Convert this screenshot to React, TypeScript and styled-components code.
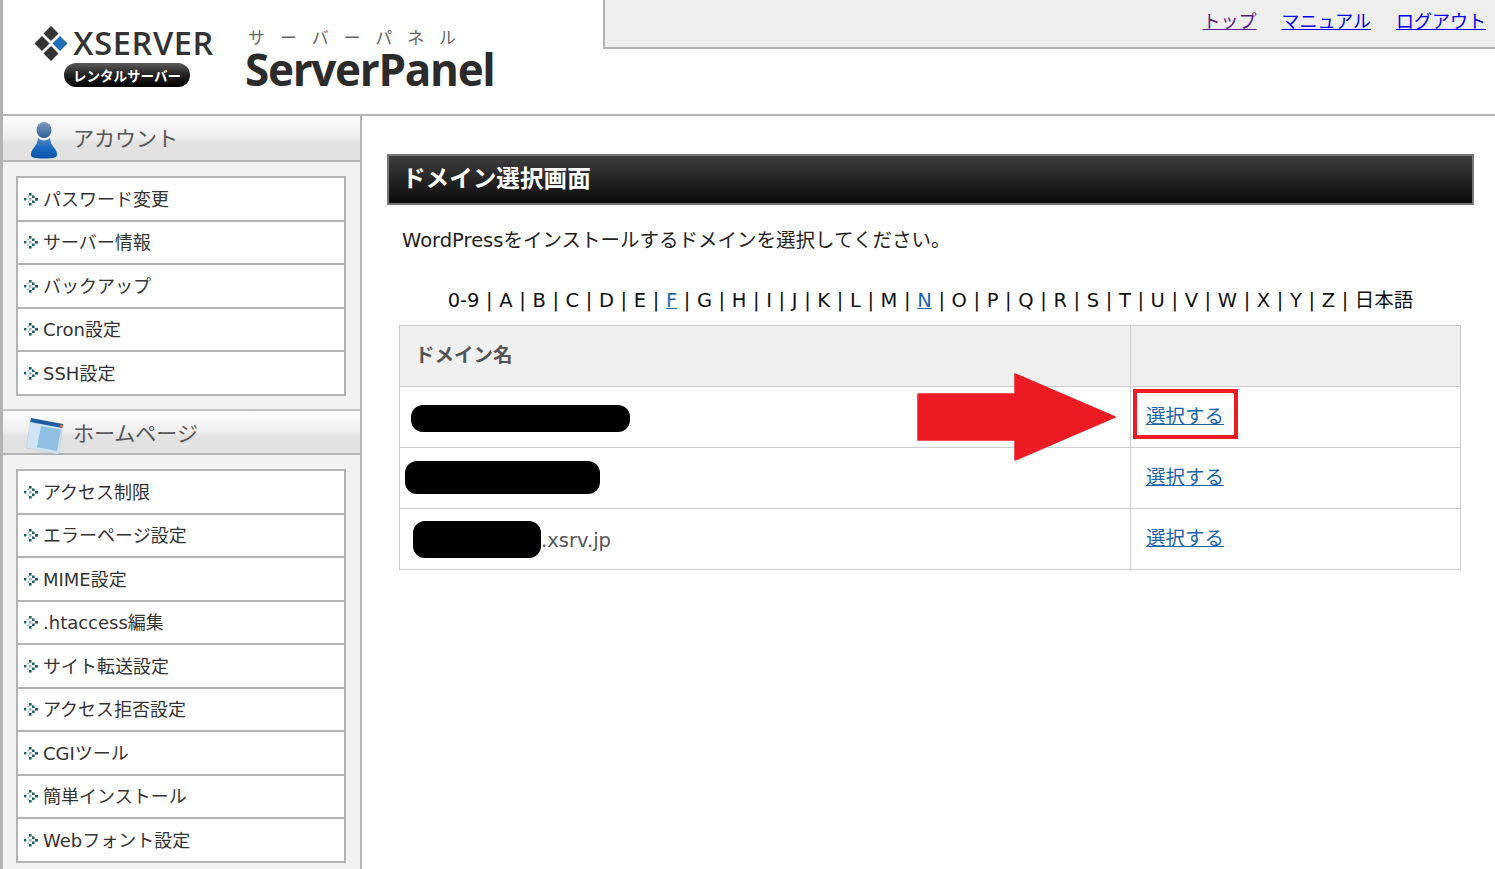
import React from 'react';
import styled, { createGlobalStyle } from 'styled-components';

const GlobalStyle = createGlobalStyle`
  html, body {
    margin: 0;
    padding: 0;
    height: 100%;
    overflow: hidden;
    background: #fff;
  }
  body {
    font-family: "DejaVu Sans", "Noto Sans CJK JP", sans-serif;
    color: #333;
  }
`;

const Page = styled.div`
  height: 869px;
  overflow: hidden;
  border-left: 3px solid #b3b3b3;
  display: flex;
  flex-direction: column;
`;

const Header = styled.header`
  height: 114px;
  flex: none;
  display: flex;
  justify-content: space-between;
  align-items: flex-start;
  border-bottom: 2px solid #b3b3b3;
`;

const Logos = styled.div`
  display: flex;
  padding: 25px 0 0 32px;
`;

const XserverLogo = styled.div`
  width: 179px;
  display: flex;
  flex-direction: column;
  align-items: flex-end;
`;

const XserverRow = styled.div`
  display: flex;
  align-items: center;
  gap: 5px;
  height: 36px;
`;

const XserverName = styled.span`
  font-family: "Open Sans", sans-serif;
  font-size: 32.5px;
  font-weight: 600;
  line-height: 36px;
  color: #333;
  letter-spacing: 0.65px;
`;

const RentalPill = styled.div`
  width: 126px;
  height: 24px;
  margin: 2px 24px 0 0;
  border-radius: 12px;
  background: linear-gradient(#5a5a5a, #222 50%, #000);
  color: #fff;
  font-family: "Noto Sans CJK JP", sans-serif;
  font-size: 13.5px;
  font-weight: 700;
  line-height: 24px;
  text-align: center;
  white-space: nowrap;
`;

const PanelLogo = styled.div`
  margin-left: 31px;
  display: flex;
  flex-direction: column;
`;

const PanelKana = styled.span`
  font-family: "Noto Sans CJK JP", sans-serif;
  font-size: 17px;
  line-height: 24px;
  letter-spacing: 14.9px;
  color: #666;
  padding-left: 3px;
  white-space: nowrap;
`;

const PanelName = styled.span`
  font-family: "Open Sans", sans-serif;
  font-size: 44px;
  font-weight: 700;
  line-height: 48px;
  margin-top: -4px;
  letter-spacing: -1.3px;
  color: #2b2b2b;
`;

const TopBar = styled.nav`
  width: 892px;
  height: 49px;
  box-sizing: border-box;
  background: #eee;
  border-left: 2px solid #b3b3b3;
  border-bottom: 2px solid #b3b3b3;
  display: flex;
  justify-content: flex-end;
  gap: 25px;
  padding: 7px 9px 0 0;
  font-family: "Noto Sans CJK JP", sans-serif;
  font-size: 18px;
  line-height: 26px;
`;

const TopLink = styled.a<{ $visited?: boolean }>`
  color: ${(p) => (p.$visited ? '#551a8b' : '#0000ee')};
  text-decoration: underline;
  cursor: pointer;
`;

const Body = styled.div`
  flex: 1;
  display: flex;
  min-height: 0;
`;

const Sidebar = styled.aside`
  width: 357px;
  flex: none;
  box-sizing: content-box;
  background: #f2f2f2;
  border-right: 2px solid #b3b3b3;
`;

const SectionHead = styled.div<{ $first?: boolean }>`
  height: 46px;
  box-sizing: border-box;
  display: flex;
  align-items: center;
  gap: 9px;
  padding-left: ${(p) => (p.$first ? '27px' : '23px')};
  background: linear-gradient(#fdfdfd 0%, #eeeeee 50%, #e2e2e2 60%, #e2e2e2 100%);
  border-top: ${(p) => (p.$first ? 'none' : '2px solid #c4c4c4')};
  border-bottom: 2px solid #b3b3b3;
  margin-top: ${(p) => (p.$first ? '0' : '13.5px')};
`;

const SectionTitle = styled.span<{ $first?: boolean }>`
  font-family: "Noto Sans CJK JP", sans-serif;
  font-size: 21px;
  color: #555;
  margin-left: ${(p) => (p.$first ? '6px' : '0')};
  margin-top: ${(p) => (p.$first ? '-2px' : '0')};
`;

const SectionIcon = styled.svg<{ $drop: number }>`
  flex: none;
  margin-top: ${(p) => p.$drop}px;
`;

const MenuBox = styled.ul`
  list-style: none;
  margin: 14px 14px 0 13px;
  padding: 0;
  background: #fff;
  border: 2px solid #b3b3b3;
`;

const MenuRow = styled.li`
  height: 41.5px;
  box-sizing: content-box;
  display: flex;
  align-items: center;
  gap: 3px;
  padding-left: 6px;
  font-size: 18px;
  color: #333;
  white-space: nowrap;
  & + & {
    border-top: 2px solid #b3b3b3;
  }
`;

const MenuText = styled.span`
  margin-top: -2px;
`;

const BulletIcon = styled.svg`
  flex: none;
`;

const Main = styled.main`
  flex: 1;
  padding: 38px 21px 0 25px;
  min-width: 0;
`;

const TitleBar = styled.h1`
  margin: 0;
  height: 51px;
  box-sizing: border-box;
  border: 2px solid #777;
  background: linear-gradient(#3e3e3e, #0c0c0c);
  color: #fff;
  font-family: "Noto Sans CJK JP", sans-serif;
  font-size: 23.6px;
  font-weight: 700;
  line-height: 43px;
  padding-left: 13px;
`;

const Lead = styled.p`
  margin: 21px 0 0 15px;
  font-size: 19.5px;
  line-height: 30px;
  color: #222;
`;

const AlphaNav = styled.div`
  margin: 30px 0 0;
  font-size: 19.5px;
  word-spacing: 0.4px;
  line-height: 30px;
  color: #111;
  text-align: center;
  white-space: nowrap;
`;

const AlphaLink = styled.a`
  color: #1a66ab;
  text-decoration: underline;
`;

const DomainTable = styled.table`
  position: relative;
  width: 1061px;
  margin: 9px 0 0 12px;
  border-collapse: collapse;
  table-layout: fixed;
  font-size: 19.5px;
`;

const HeadCell = styled.th`
  height: 61px;
  padding: 0 0 6px 15px;
  box-sizing: border-box;
  border: 1px solid #ccc;
  background: #f0f0f0;
  text-align: left;
  color: #555;
  font-family: "Noto Sans CJK JP", sans-serif;
  font-size: 19.5px;
  font-weight: 700;
`;

const Cell = styled.td`
  position: relative;
  height: 60px;
  padding: 0 0 0 15px;
  border: 1px solid #ccc;
  color: #555;
  white-space: nowrap;
`;

const Redaction = styled.span<{ $w: number; $h: number; $x: number; $y: number }>`
  display: inline-block;
  width: ${(p) => p.$w}px;
  height: ${(p) => p.$h}px;
  margin-left: ${(p) => p.$x}px;
  border-radius: 12px;
  background: #000;
  vertical-align: middle;
  position: relative;
  top: ${(p) => p.$y}px;
`;

const DomainSuffix = styled.span`
  position: relative;
  top: 2px;
`;

const SelectLink = styled.a`
  color: #1a66ab;
  text-decoration: underline;
  cursor: pointer;
  position: relative;
  top: -3px;
`;

const Highlight = styled.span`
  position: absolute;
  left: 2px;
  top: 2px;
  width: 105px;
  height: 50px;
  box-sizing: border-box;
  border: 4px solid #ed1c24;
`;

const ArrowMark = styled.svg`
  position: absolute;
  left: -215px;
  top: -14px;
  width: 202px;
  height: 89px;
`;

const Bullet = () => (
  <BulletIcon width="16" height="16" viewBox="0 0 16 16">
    <g fill="#1f5f66">
      <rect x="0" y="7" width="2.4" height="2.4" />
      <rect x="5" y="2" width="2.6" height="2.6" />
      <rect x="8" y="4.5" width="2.6" height="2.6" />
      <rect x="11" y="7" width="3" height="2.6" />
      <rect x="8" y="9.5" width="2.6" height="2.6" />
      <rect x="5" y="12" width="2.6" height="2.6" />
    </g>
    <g fill="#8fb6ba">
      <rect x="5" y="7" width="2.6" height="2.6" />
      <rect x="3.5" y="4.8" width="1.5" height="1.5" />
      <rect x="3.5" y="10.3" width="1.5" height="1.5" />
    </g>
  </BulletIcon>
);

const DiamondMark = () => (
  <svg width="34" height="35" viewBox="0 0 34 35">
    <path d="M17 0l7.500 7.500-7.500 7.500-7.500-7.500z" fill="#333" />
    <path d="M8 10l7.500 7.500-7.500 7.500-7.500-7.500z" fill="#333" />
    <path d="M17 20l7.500 7.500-7.500 7.500-7.500-7.500z" fill="#333" />
    <path d="M26 10l7.500 7.500-7.500 7.500-7.500-7.500z" fill="#1f6fb5" />
  </svg>
);

const PersonIcon = () => (
  <SectionIcon $drop={5} width="28" height="37" viewBox="0 0 28 37">
    <defs>
      <linearGradient id="personBody" x1="0" y1="0" x2="0" y2="1">
        <stop offset="0" stopColor="#4f86bd" />
        <stop offset="0.55" stopColor="#1668c0" />
        <stop offset="1" stopColor="#0c55a6" />
      </linearGradient>
      <linearGradient id="personHead" x1="0" y1="0" x2="0" y2="1">
        <stop offset="0" stopColor="#7f9dbd" />
        <stop offset="1" stopColor="#2b5f96" />
      </linearGradient>
    </defs>
    <ellipse cx="14" cy="8" rx="7.500" ry="8" fill="url(#personHead)" />
    <path d="M8 16c1 1.500 3.500 2.400 6 2.400s5-.9 6-2.400c.5 5 2 7 5 11 2 3 3 6 1 8-3 2-21 2-24 0-2-2-1-5 1-8 3-4 4.500-6 5-11z" fill="url(#personBody)" />
  </SectionIcon>
);

const PageIcon = () => (
  <SectionIcon $drop={8} width="38" height="36" viewBox="0 0 38 36">
    <path d="M5 1l32 6-5 29-32-6z" fill="#cfe4f4" stroke="#c9d2da" strokeWidth="0.8" />
    <path d="M15 8l20 3.600-4 21.400-20-3.800z" fill="#8fc0e4" />
    <path d="M5 0l32 6-.8 4-32-6z" fill="#1e5ca8" />
    <circle cx="35" cy="8" r="1.600" fill="#e0642a" />
  </SectionIcon>
);

const accountMenu = ['パスワード変更', 'サーバー情報', 'バックアップ', 'Cron設定', 'SSH設定'];
const homepageMenu = [
  'アクセス制限',
  'エラーページ設定',
  'MIME設定',
  '.htaccess編集',
  'サイト転送設定',
  'アクセス拒否設定',
  'CGIツール',
  '簡単インストール',
  'Webフォント設定',
];
const letters = '0-9 A B C D E F G H I J K L M N O P Q R S T U V W X Y Z 日本語'.split(' ');

const App = () => {
  return (
    <Page>
      <GlobalStyle />
      <Header>
        <Logos>
          <XserverLogo>
            <XserverRow>
              <DiamondMark />
              <XserverName>XSERVER</XserverName>
            </XserverRow>
            <RentalPill>レンタルサーバー</RentalPill>
          </XserverLogo>
          <PanelLogo>
            <PanelKana>サーバーパネル</PanelKana>
            <PanelName>ServerPanel</PanelName>
          </PanelLogo>
        </Logos>
        <TopBar>
          <TopLink $visited>トップ</TopLink>
          <TopLink>マニュアル</TopLink>
          <TopLink>ログアウト</TopLink>
        </TopBar>
      </Header>
      <Body>
        <Sidebar>
          <SectionHead $first>
            <PersonIcon />
            <SectionTitle $first>アカウント</SectionTitle>
          </SectionHead>
          <MenuBox>
            {accountMenu.map((item) => (
              <MenuRow key={item}>
                <Bullet />
                <MenuText>{item}</MenuText>
              </MenuRow>
            ))}
          </MenuBox>
          <SectionHead>
            <PageIcon />
            <SectionTitle>ホームページ</SectionTitle>
          </SectionHead>
          <MenuBox>
            {homepageMenu.map((item) => (
              <MenuRow key={item}>
                <Bullet />
                <MenuText>{item}</MenuText>
              </MenuRow>
            ))}
          </MenuBox>
        </Sidebar>
        <Main>
          <TitleBar>ドメイン選択画面</TitleBar>
          <Lead>WordPressをインストールするドメインを選択してください。</Lead>
          <AlphaNav>
            {letters.map((l, i) => (
              <React.Fragment key={l}>
                {i > 0 && ' | '}
                {l === 'F' || l === 'N' ? <AlphaLink>{l}</AlphaLink> : l}
              </React.Fragment>
            ))}
          </AlphaNav>
          <DomainTable>
            <colgroup>
              <col style={{ width: 731 }} />
              <col style={{ width: 330 }} />
            </colgroup>
            <thead>
              <tr>
                <HeadCell>ドメイン名</HeadCell>
                <HeadCell />
              </tr>
            </thead>
            <tbody>
              <tr>
                <Cell>
                  <Redaction $w={219} $h={27} $x={-4} $y={1} />
                </Cell>
                <Cell>
                  <ArrowMark viewBox="0 0 202 89">
                    <path d="M2 21h97V1l100 43L99 87V67H2z" fill="#ed1c24" stroke="#ed1c24" strokeWidth="1.500" strokeLinejoin="round" />
                  </ArrowMark>
                  <Highlight />
                  <SelectLink>選択する</SelectLink>
                </Cell>
              </tr>
              <tr>
                <Cell>
                  <Redaction $w={195} $h={33} $x={-10} $y={-1} />
                </Cell>
                <Cell>
                  <SelectLink>選択する</SelectLink>
                </Cell>
              </tr>
              <tr>
                <Cell>
                  <Redaction $w={128} $h={37} $x={-2} $y={0} />
                  <DomainSuffix>.xsrv.jp</DomainSuffix>
                </Cell>
                <Cell>
                  <SelectLink>選択する</SelectLink>
                </Cell>
              </tr>
            </tbody>
          </DomainTable>
        </Main>
      </Body>
    </Page>
  );
};

export default App;
